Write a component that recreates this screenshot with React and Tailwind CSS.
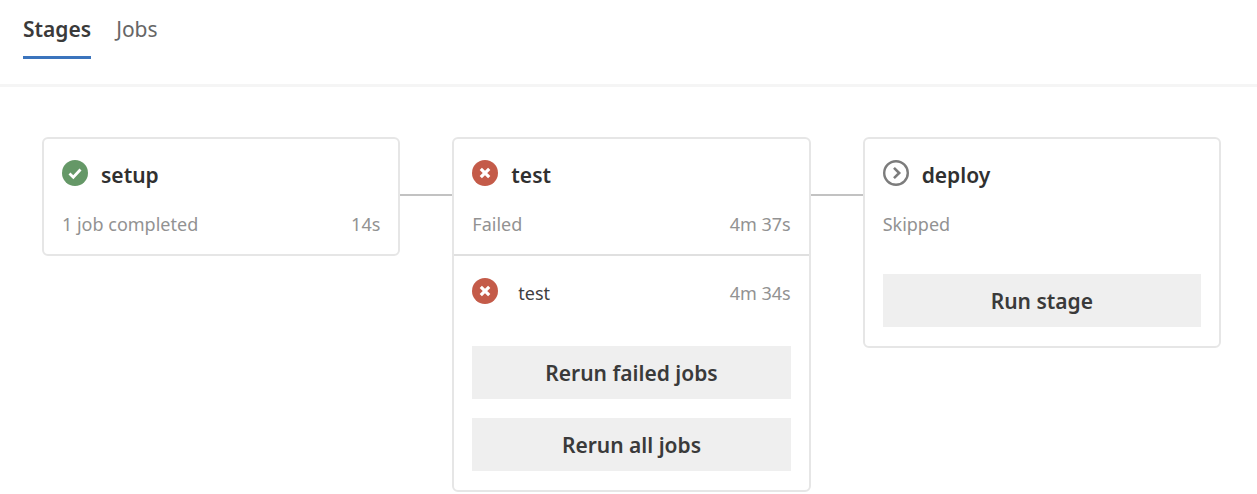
function SuccessIcon() {
  return (
    <svg className="size-[26px] shrink-0" viewBox="0 0 26 26" fill="none" aria-hidden="true">
      <circle cx="13" cy="13" r="13" fill="#659867" />
      <path d="M7.5 13.5l3.8 3.7 7.2-7.7" stroke="#fff" strokeWidth="2.8" />
    </svg>
  );
}

function FailedIcon() {
  return (
    <svg className="size-[26px] shrink-0" viewBox="0 0 26 26" fill="none" aria-hidden="true">
      <circle cx="13" cy="13" r="13" fill="#c45b49" />
      <path d="M8.8 8.8l8.4 8.4M17.2 8.8l-8.4 8.4" stroke="#fff" strokeWidth="3.2" />
    </svg>
  );
}

function SkippedIcon() {
  return (
    <svg className="size-[26px] shrink-0" viewBox="0 0 26 26" fill="none" aria-hidden="true">
      <circle cx="13" cy="13" r="11.8" stroke="#7c7c7c" strokeWidth="2.4" />
      <path d="M11 7.8l5.2 5.2-5.2 5.2" stroke="#7c7c7c" strokeWidth="2.6" />
    </svg>
  );
}

function StageHeader({ icon, name, status, time }) {
  return (
    <div className="px-[18px] pt-[21px] pb-[18px]">
      <div className="flex items-start gap-[13px]">
        {icon}
        <h2 className="text-[21px] leading-[30px] font-semibold text-[#303030]">{name}</h2>
      </div>
      <div className="mt-[22px] flex justify-between text-[18px] leading-6 text-[#929292]">
        <span>{status}</span>
        <span>{time}</span>
      </div>
    </div>
  );
}

function StageCard({ children }) {
  return (
    <section className="min-w-0 flex-1 rounded-md border-2 border-[#e6e6e6] bg-white">
      {children}
    </section>
  );
}

function Connector() {
  return <div className="mt-[57px] h-[2px] w-[52px] shrink-0 bg-[#c2c2c2]" />;
}

function StageButton({ children }) {
  return (
    <button
      type="button"
      className="h-[53px] w-full bg-[#efefef] text-[21px] leading-[30px] font-semibold text-[#3a3a3a] hover:bg-[#e4e4e4]"
    >
      {children}
    </button>
  );
}

export default function App() {
  return (
    <div className="bg-white font-['Noto_Sans','Open_Sans',sans-serif]">
      {/* Tabs */}
      <nav className="flex gap-[25px] border-b-3 border-[#f5f5f5] px-[23px] pt-[15px] pb-[25px] text-[21px] leading-7">
        <a href="#stages" className="border-b-3 border-[#3b74bd] pb-[13px] font-semibold text-[#3a3a3a]">
          Stages
        </a>
        <a href="#jobs" className="border-b-3 border-transparent pb-[13px] text-[#666666]">
          Jobs
        </a>
      </nav>

      {/* Stage graph */}
      <main className="flex items-start pt-[50px] pr-9 pl-[42px]">
        <StageCard>
          <StageHeader icon={<SuccessIcon />} name="setup" status="1 job completed" time="14s" />
        </StageCard>
        <Connector />
        <StageCard>
          <StageHeader icon={<FailedIcon />} name="test" status="Failed" time="4m 37s" />
          <div className="border-t-2 border-[#e0e0e0] px-[18px] pt-[22px] pb-[19px]">
            <div className="flex items-start">
              <FailedIcon />
              <span className="ml-5 text-[18px] leading-[30px] text-[#404040]">test</span>
              <span className="ml-auto text-[18px] leading-[30px] text-[#929292]">4m 34s</span>
            </div>
            <div className="mt-[38px] flex flex-col gap-[19px]">
              <StageButton>Rerun failed jobs</StageButton>
              <StageButton>Rerun all jobs</StageButton>
            </div>
          </div>
        </StageCard>
        <Connector />
        <StageCard>
          <StageHeader icon={<SkippedIcon />} name="deploy" status="Skipped" />
          <div className="px-[18px] pt-5 pb-[19px]">
            <StageButton>Run stage</StageButton>
          </div>
        </StageCard>
      </main>
    </div>
  );
}
